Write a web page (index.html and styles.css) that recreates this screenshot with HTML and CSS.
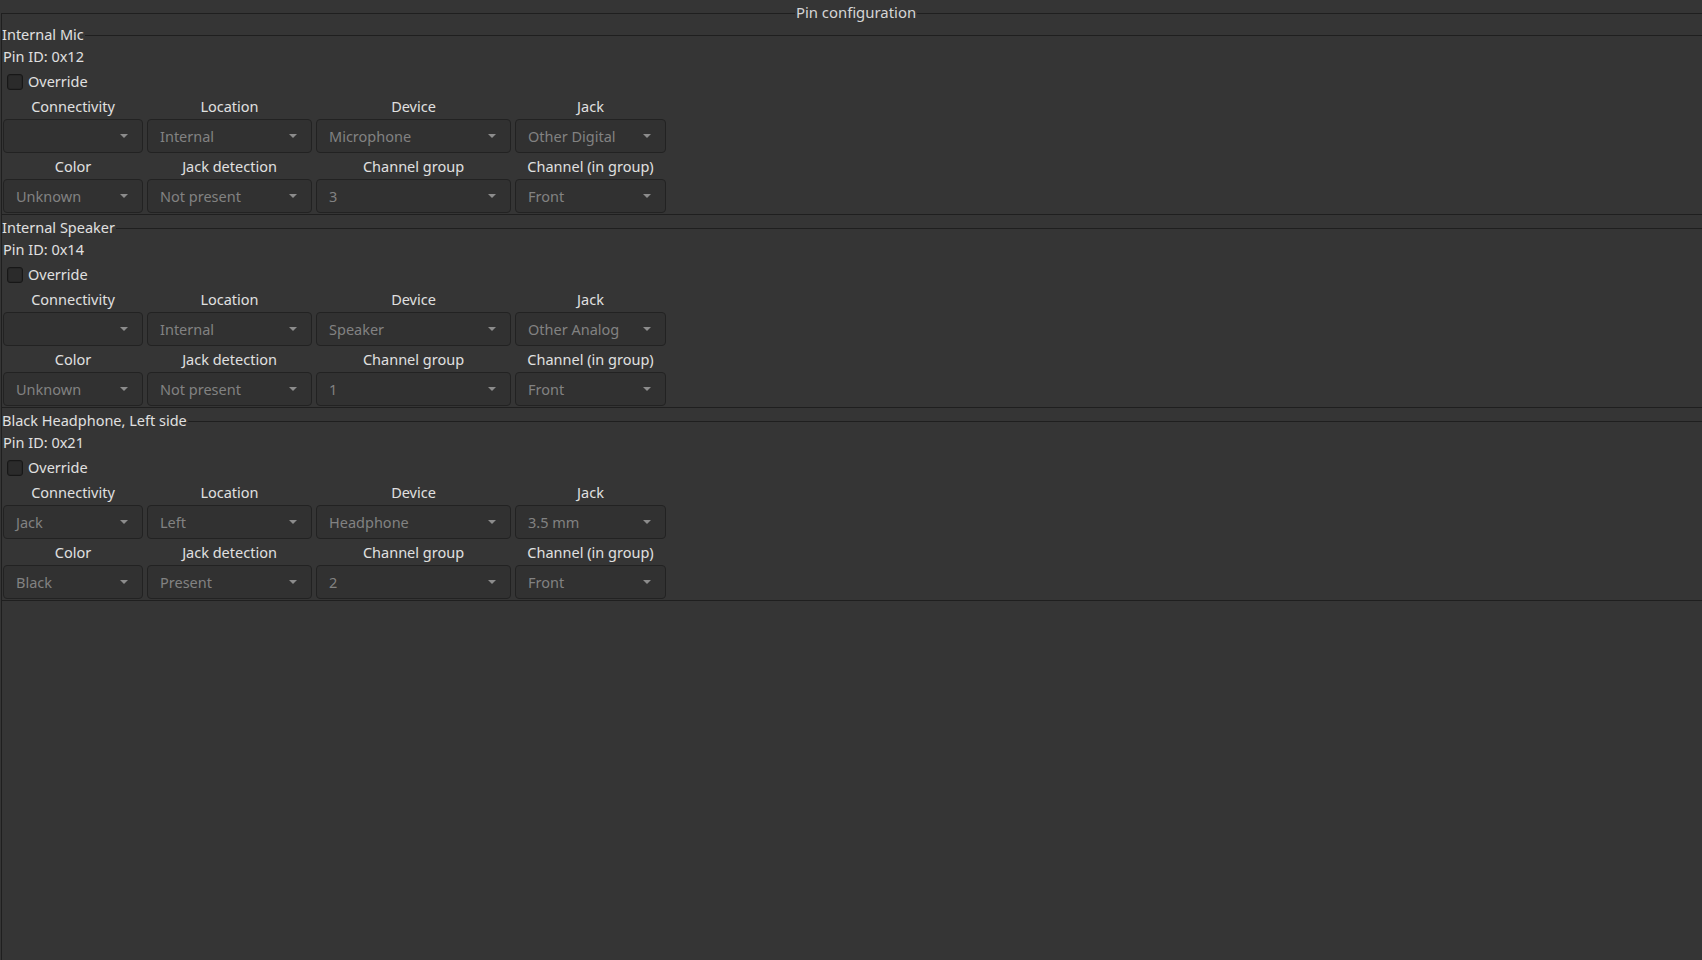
FILE: index.html
```html
<!DOCTYPE html>
<html>
<head>
<meta charset="utf-8">
<link rel="stylesheet" href="styles.css">
<title>Pin configuration</title>
</head>
<body>
<div class="frame">
  <div class="frame-title"><span>Pin configuration</span></div>

  <section class="group first">
    <div class="group-title"><span>Internal Mic</span></div>
    <div class="pin-id">Pin ID: 0x12</div>
    <label class="override"><span class="check"></span>Override</label>
    <div class="grid">
      <div class="lbl">Connectivity</div><div class="lbl">Location</div><div class="lbl">Device</div><div class="lbl">Jack</div>
      <div class="combo"><span></span><i class="arrow"></i></div>
      <div class="combo"><span>Internal</span><i class="arrow"></i></div>
      <div class="combo"><span>Microphone</span><i class="arrow"></i></div>
      <div class="combo"><span>Other Digital</span><i class="arrow"></i></div>
      <div class="lbl lbl2">Color</div><div class="lbl lbl2">Jack detection</div><div class="lbl lbl2">Channel group</div><div class="lbl lbl2">Channel (in group)</div>
      <div class="combo"><span>Unknown</span><i class="arrow"></i></div>
      <div class="combo"><span>Not present</span><i class="arrow"></i></div>
      <div class="combo"><span>3</span><i class="arrow"></i></div>
      <div class="combo"><span>Front</span><i class="arrow"></i></div>
    </div>
  </section>

  <section class="group">
    <div class="group-title"><span>Internal Speaker</span></div>
    <div class="pin-id">Pin ID: 0x14</div>
    <label class="override"><span class="check"></span>Override</label>
    <div class="grid">
      <div class="lbl">Connectivity</div><div class="lbl">Location</div><div class="lbl">Device</div><div class="lbl">Jack</div>
      <div class="combo"><span></span><i class="arrow"></i></div>
      <div class="combo"><span>Internal</span><i class="arrow"></i></div>
      <div class="combo"><span>Speaker</span><i class="arrow"></i></div>
      <div class="combo"><span>Other Analog</span><i class="arrow"></i></div>
      <div class="lbl lbl2">Color</div><div class="lbl lbl2">Jack detection</div><div class="lbl lbl2">Channel group</div><div class="lbl lbl2">Channel (in group)</div>
      <div class="combo"><span>Unknown</span><i class="arrow"></i></div>
      <div class="combo"><span>Not present</span><i class="arrow"></i></div>
      <div class="combo"><span>1</span><i class="arrow"></i></div>
      <div class="combo"><span>Front</span><i class="arrow"></i></div>
    </div>
  </section>

  <section class="group">
    <div class="group-title"><span>Black Headphone, Left side</span></div>
    <div class="pin-id">Pin ID: 0x21</div>
    <label class="override"><span class="check"></span>Override</label>
    <div class="grid">
      <div class="lbl">Connectivity</div><div class="lbl">Location</div><div class="lbl">Device</div><div class="lbl">Jack</div>
      <div class="combo"><span>Jack</span><i class="arrow"></i></div>
      <div class="combo"><span>Left</span><i class="arrow"></i></div>
      <div class="combo"><span>Headphone</span><i class="arrow"></i></div>
      <div class="combo"><span>3.5 mm</span><i class="arrow"></i></div>
      <div class="lbl lbl2">Color</div><div class="lbl lbl2">Jack detection</div><div class="lbl lbl2">Channel group</div><div class="lbl lbl2">Channel (in group)</div>
      <div class="combo"><span>Black</span><i class="arrow"></i></div>
      <div class="combo"><span>Present</span><i class="arrow"></i></div>
      <div class="combo"><span>2</span><i class="arrow"></i></div>
      <div class="combo"><span>Front</span><i class="arrow"></i></div>
    </div>
  </section>
</div>
</body>
</html>
```

FILE: styles.css
```css
html, body {
  margin: 0;
  padding: 0;
  background: #353535;
  height: 100%;
  overflow: hidden;
}

body {
  font-family: "Noto Sans", "Open Sans", sans-serif;
  font-size: 14.5px;
  color: #e0e0e0;
}

.frame {
  margin-top: 13px;
  margin-left: 1px;
  border-top: 1px solid #1f1f1f;
  border-left: 1px solid #1f1f1f;
  min-height: 960px;
}

.frame-title {
  margin-top: -11px;
  height: 20px;
  line-height: 19px;
  text-align: center;
  padding-left: 8px;
}

.frame-title span {
  background: #353535;
  padding: 0 1px;
  color: #d6d6d6;
  font-size: 14.9px;
}

.group {
  border-top: 1px solid #1f1f1f;
  border-bottom: 1px solid #1f1f1f;
  margin-top: 13px;
  padding-bottom: 1px;
}

.group.first {
  margin-top: 12px;
}

.group-title {
  margin-top: -11px;
  height: 20px;
  line-height: 18px;
}

.group-title span {
  background: #353535;
  padding-right: 1px;
}

.pin-id {
  margin-top: 2px;
  height: 20px;
  line-height: 18px;
  padding-left: 1px;
}

.override {
  margin-top: 4px;
  height: 20px;
  line-height: 18px;
  display: flex;
  align-items: center;
  padding-left: 5px;
  gap: 5px;
}

.check {
  width: 14px;
  height: 14px;
  border: 1px solid #171717;
  border-radius: 3px;
  background: #2b2b2b;
  box-shadow: inset 0 0 0 1px #262626;
  margin-top: 2px;
}

.grid {
  margin-top: 6px;
  display: grid;
  grid-template-columns: 140px 165px 195px 151px;
  column-gap: 4px;
  padding-left: 1px;
}

.lbl {
  height: 20px;
  line-height: 18px;
  text-align: center;
  margin-bottom: 2px;
  white-space: nowrap;
}

.lbl2 {
  margin-top: 4px;
}

.combo {
  height: 32px;
  border: 1px solid #222222;
  border-radius: 4px;
  background: #313131;
  display: flex;
  align-items: center;
  justify-content: space-between;
  padding: 0 14px 0 12px;
  color: #828282;
  white-space: nowrap;
}

.arrow {
  width: 0;
  height: 0;
  border-left: 4.5px solid transparent;
  border-right: 4.5px solid transparent;
  border-top: 4.5px solid #8c8c8c;
}
```
